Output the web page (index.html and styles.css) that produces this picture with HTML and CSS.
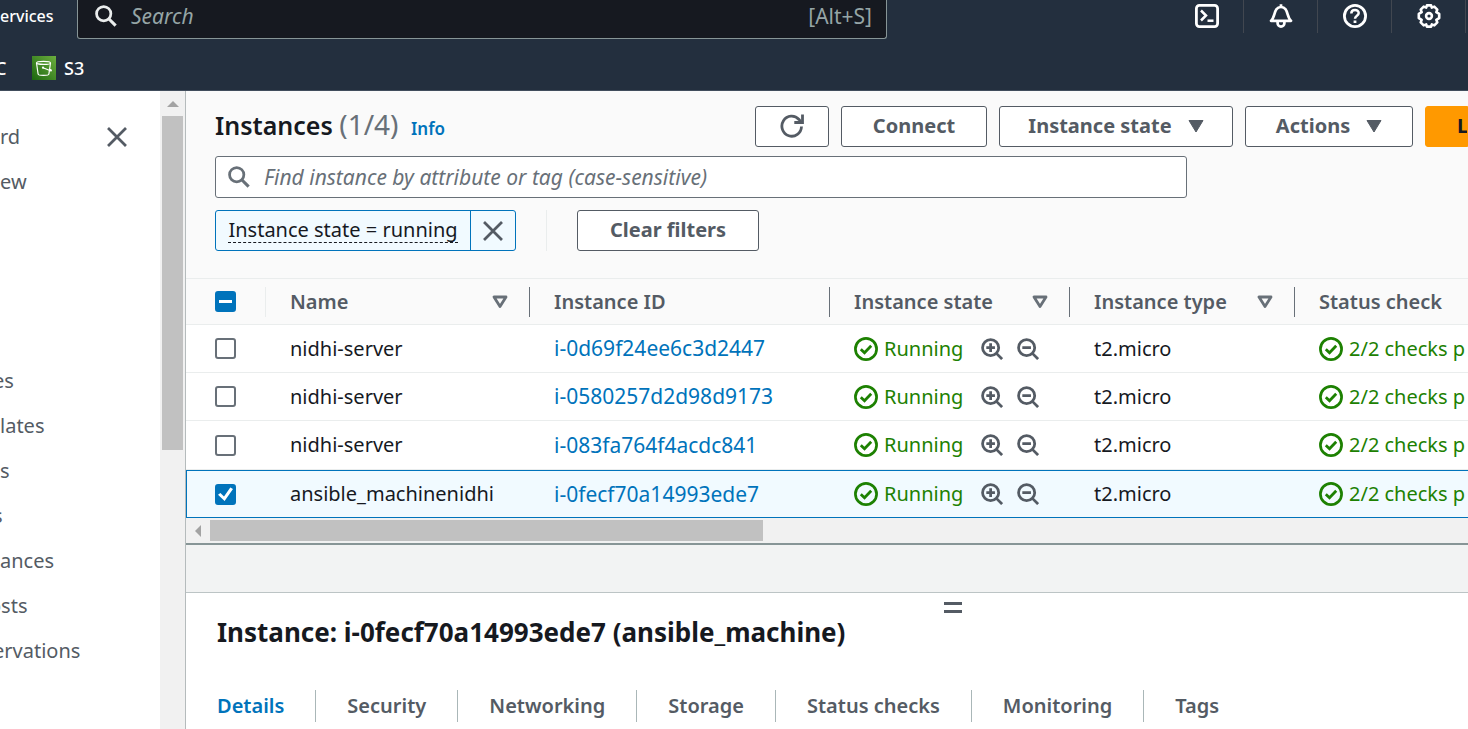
FILE: index.html
```html
<!DOCTYPE html>
<html lang="en">
<head>
<meta charset="utf-8">
<title>Instances</title>
<link rel="stylesheet" href="styles.css">
</head>
<body>
<svg class="sprite" aria-hidden="true">
  <symbol id="search" viewBox="0 0 24 24"><circle cx="9.5" cy="9.5" r="7.8" fill="none" stroke="currentColor" stroke-width="3"/><path d="M15 15l7.500 7.500" fill="none" stroke="currentColor" stroke-width="3.4"/></symbol>
  <symbol id="close" viewBox="0 0 24 24"><path d="M2.200 2.200l19.600 19.600M21.800 2.200L2.200 21.800" fill="none" stroke="currentColor" stroke-width="3"/></symbol>
  <symbol id="caret" viewBox="0 0 16 14"><path d="M1 1.500h14L8 13z" fill="currentColor" stroke="currentColor" stroke-linejoin="round"/></symbol>
  <symbol id="sort" viewBox="0 0 16 14"><path d="M2 2h12L8 11.500z" fill="none" stroke="currentColor" stroke-width="2.800" stroke-linejoin="round"/></symbol>
  <symbol id="ok" viewBox="0 0 24 24"><circle cx="12" cy="12" r="10.600" fill="none" stroke="currentColor" stroke-width="2.700"/><path d="M6.800 12.200l3.700 3.500 6.700-7" fill="none" stroke="currentColor" stroke-width="2.800"/></symbol>
  <symbol id="zoom-in" viewBox="0 0 24 24"><circle cx="10.500" cy="10.500" r="8.800" fill="none" stroke="currentColor" stroke-width="3"/><path d="M16.500 16.500l6.500 6.500M10.500 5.800v9.400M5.800 10.500h9.400" fill="none" stroke="currentColor" stroke-width="3"/></symbol>
  <symbol id="zoom-out" viewBox="0 0 24 24"><circle cx="10.500" cy="10.500" r="8.800" fill="none" stroke="currentColor" stroke-width="3"/><path d="M16.500 16.500l6.500 6.500M5.800 10.500h9.400" fill="none" stroke="currentColor" stroke-width="3"/></symbol>
</svg>

<header class="topbar">
  <div class="topbar-main">
    <button class="services" type="button">ervices</button>
    <label class="global-search">
      <svg class="icon-md"><use href="#search"/></svg>
      <input type="text" placeholder="Search" aria-label="Search">
      <span class="shortcut">[Alt+S]</span>
    </label>
    <div class="utilities">
      <button type="button" aria-label="CloudShell"><svg class="icon-lg" viewBox="0 0 24 24" fill="none" stroke="currentColor" stroke-width="2.800"><rect x="1.400" y="1.400" width="21.200" height="21.200" rx="3"/><path d="M6 6.500l5 5-5 5" stroke-width="2.500"/><path d="M12.500 16.700h6" stroke-width="2.500"/></svg></button>
      <button type="button" aria-label="Notifications"><svg class="icon-lg" viewBox="0 0 24 24" fill="none" stroke="currentColor" stroke-width="2.700" stroke-linejoin="round"><path d="M2 16.800C6.500 13.500 4.500 3 12 3s5.500 10.500 10 13.800z"/><path d="M12 .3v3M8.600 17.500v1.700a3.400 3.400 0 0 0 6.800 0v-1.700"/></svg></button>
      <button type="button" aria-label="Help"><svg class="icon-lg" viewBox="0 0 24 24" fill="none" stroke="currentColor" stroke-width="2.800"><circle cx="12" cy="12" r="10.600"/><path d="M8.300 9.500c0-4.800 7.400-4.600 7.400-.4 0 2.900-3.700 2.500-3.700 5.700" stroke-width="2.500"/><path d="M12 16.500v2.500" stroke-width="2.800"/></svg></button>
      <button type="button" aria-label="Settings"><svg class="icon-lg" viewBox="0 0 24 24" fill="none" stroke="currentColor" stroke-width="2.600" stroke-linejoin="round"><path d="M9.900 1.400h4.200l.7 2.200 2.500-1 3 3-1 2.600 2.900 1.700v4.200l-2.900 1.700 1 2.600-3 3-2.500-1-.7 2.200H9.900l-.7-2.200-2.500 1-3-3 1-2.600-2.900-1.700V9.900l2.900-1.700-1-2.600 3-3 2.500 1z"/><circle cx="12" cy="12" r="2.900"/></svg></button>
    </div>
  </div>
  <nav class="favorites" aria-label="Favorites">
    <a href="#" class="fav-cut">C</a>
    <a href="#" class="fav">
      <svg class="icon-lg" viewBox="0 0 24 24"><defs><linearGradient id="s3" x1="0" y1="1" x2="1" y2="0"><stop offset="0" stop-color="#1b660f"/><stop offset="1" stop-color="#6cae3e"/></linearGradient></defs><path fill="url(#s3)" d="M0 0h24v24H0z"/><g fill="none" stroke="#fff" stroke-width="1.200"><ellipse cx="11.500" cy="6.900" rx="7" ry="1.500"/><path d="M4.500 7l1.600 11c.2 1.900 10.600 1.900 10.800 0l1.600-11M11 11.800l7.500 3c1.500.4 1-1-1-1.900"/></g><circle cx="11" cy="11.700" r="1.100" fill="#fff"/></svg>
      <span>S3</span>
    </a>
  </nav>
</header>

<div class="shell">
  <aside class="sidebar">
    <nav class="side-nav" aria-label="EC2">
      <div class="side-row"><a href="#">rd</a><button type="button" aria-label="Close navigation"><svg class="icon-md"><use href="#close"/></svg></button></div>
      <a href="#">ew</a>
      <a href="#" class="group-start tuck">es</a>
      <a href="#">lates</a>
      <a href="#">s</a>
      <a href="#" class="tuck">s</a>
      <a href="#">ances</a>
      <a href="#" class="tuck-more">osts</a>
      <a href="#" class="tuck">ervations</a>
    </nav>
    <div class="vscroll"><svg class="arrow" viewBox="0 0 12 12"><path d="M0 9l6-6 6 6z"/></svg><div class="vthumb"></div></div>
  </aside>

  <main class="content">
    <section class="panel-head">
      <div class="title-row">
        <h1>Instances <span class="count">(1/4)</span> <a href="#">Info</a></h1>
        <div class="actions">
          <button class="btn btn-refresh" type="button" aria-label="Refresh"><svg class="icon-lg" viewBox="0 0 24 24" fill="none" stroke="currentColor" stroke-width="2.800"><path d="M21.500 12.500A9.800 10 0 1 1 19 5.500l2 2.500"/><path d="M22.500.5v8h-8.200"/></svg></button>
          <button class="btn btn-connect" type="button">Connect</button>
          <button class="btn btn-state" type="button">Instance state <svg class="caret"><use href="#caret"/></svg></button>
          <button class="btn btn-actions" type="button">Actions <svg class="caret"><use href="#caret"/></svg></button>
          <button class="btn btn-launch" type="button">L</button>
        </div>
      </div>
      <label class="filter-box">
        <svg class="icon-md"><use href="#search"/></svg>
        <input type="text" placeholder="Find instance by attribute or tag (case-sensitive)" aria-label="Find instance by attribute or tag">
      </label>
      <div class="filter-row">
        <div class="token">
          <button class="token-text" type="button"><span>Instance state = running</span></button>
          <button class="token-x" type="button" aria-label="Remove filter"><svg class="icon-md"><use href="#close"/></svg></button>
        </div>
        <div class="clear-wrap"><button class="btn btn-clear" type="button">Clear filters</button></div>
      </div>
    </section>

    <table class="instances">
      <colgroup><col class="c-check"><col class="c-name"><col class="c-id"><col class="c-state"><col class="c-type"><col></colgroup>
      <thead>
        <tr>
          <th class="light"><input type="checkbox" class="mixed" aria-label="Select all"></th>
          <th><div>Name <svg class="sort"><use href="#sort"/></svg></div></th>
          <th><div>Instance ID</div></th>
          <th><div>Instance state <svg class="sort"><use href="#sort"/></svg></div></th>
          <th><div>Instance type <svg class="sort"><use href="#sort"/></svg></div></th>
          <th><div>Status check</div></th>
        </tr>
      </thead>
      <tbody>
        <tr>
          <td><input type="checkbox" aria-label="Select i-0d69f24ee6c3d2447"></td><td>nidhi-server</td><td><a href="#">i-0d69f24ee6c3d2447</a></td>
          <td><div class="status"><svg class="icon-lg"><use href="#ok"/></svg><span>Running</span><button type="button" aria-label="Include"><svg class="icon-md"><use href="#zoom-in"/></svg></button><button type="button" aria-label="Exclude"><svg class="icon-md"><use href="#zoom-out"/></svg></button></div></td>
          <td>t2.micro</td><td><div class="status"><svg class="icon-lg"><use href="#ok"/></svg><span>2/2 checks p</span></div></td>
        </tr>
        <tr>
          <td><input type="checkbox" aria-label="Select i-0580257d2d98d9173"></td><td>nidhi-server</td><td><a href="#">i-0580257d2d98d9173</a></td>
          <td><div class="status"><svg class="icon-lg"><use href="#ok"/></svg><span>Running</span><button type="button" aria-label="Include"><svg class="icon-md"><use href="#zoom-in"/></svg></button><button type="button" aria-label="Exclude"><svg class="icon-md"><use href="#zoom-out"/></svg></button></div></td>
          <td>t2.micro</td><td><div class="status"><svg class="icon-lg"><use href="#ok"/></svg><span>2/2 checks p</span></div></td>
        </tr>
        <tr class="before-selected">
          <td><input type="checkbox" aria-label="Select i-083fa764f4acdc841"></td><td>nidhi-server</td><td><a href="#">i-083fa764f4acdc841</a></td>
          <td><div class="status"><svg class="icon-lg"><use href="#ok"/></svg><span>Running</span><button type="button" aria-label="Include"><svg class="icon-md"><use href="#zoom-in"/></svg></button><button type="button" aria-label="Exclude"><svg class="icon-md"><use href="#zoom-out"/></svg></button></div></td>
          <td>t2.micro</td><td><div class="status"><svg class="icon-lg"><use href="#ok"/></svg><span>2/2 checks p</span></div></td>
        </tr>
        <tr class="selected">
          <td><input type="checkbox" checked aria-label="Select i-0fecf70a14993ede7"></td><td>ansible_machinenidhi</td><td><a href="#">i-0fecf70a14993ede7</a></td>
          <td><div class="status"><svg class="icon-lg"><use href="#ok"/></svg><span>Running</span><button type="button" aria-label="Include"><svg class="icon-md"><use href="#zoom-in"/></svg></button><button type="button" aria-label="Exclude"><svg class="icon-md"><use href="#zoom-out"/></svg></button></div></td>
          <td>t2.micro</td><td><div class="status"><svg class="icon-lg"><use href="#ok"/></svg><span>2/2 checks p</span></div></td>
        </tr>
      </tbody>
    </table>
    <div class="hscroll"><svg class="arrow" viewBox="0 0 12 12"><path d="M9 0L3 6l6 6z"/></svg><div class="hthumb"></div></div>
    <div class="spacer"></div>

    <section class="details">
      <div class="grip"><span></span></div>
      <h2>Instance: i-0fecf70a14993ede7 (ansible_machine)</h2>
      <nav class="tabs" aria-label="Instance details">
        <a href="#" class="active">Details</a><a href="#">Security</a><a href="#">Networking</a><a href="#">Storage</a><a href="#">Status checks</a><a href="#">Monitoring</a><a href="#">Tags</a>
      </nav>
    </section>
  </main>
</div>
</body>
</html>
```
FILE: styles.css
```css
* { box-sizing: border-box; }
body {
  margin: 0;
  height: 100vh;
  display: flex;
  flex-direction: column;
  overflow: hidden;
  background: #fff;
  color: #16191f;
  font: 20px/28px "Noto Sans", "Open Sans", sans-serif;
}
a { color: #0073bb; text-decoration: none; }
button { font: inherit; color: inherit; background: none; border: 0; padding: 0; white-space: nowrap; }
input { font: inherit; }
svg { flex: none; display: block; }
.sprite { display: none; }
.icon-md { width: 22px; height: 22px; }
.icon-lg { width: 24px; height: 24px; }

/* Top bar */
.topbar { flex: none; background: #232f3e; color: #fff; border-bottom: 1px solid #414d5c; }
.topbar-main { display: flex; align-items: flex-start; height: 39px; }
.services { width: 77px; height: 32px; padding-right: 24px; text-align: right; font-size: 16px; font-weight: 500; }
.global-search {
  display: flex;
  align-items: center;
  width: 810px;
  height: 39px;
  padding: 0 14px 7px 17px;
  background: #161920;
  border: 1px solid #879596;
  border-top: 0;
  border-radius: 0 0 3px 3px;
}
.global-search svg { color: #eaeded; }
.global-search input { flex: 1; min-width: 0; margin-left: 14px; padding: 0; border: 0; background: none; font-size: 21px; }
.global-search input::placeholder { color: #95a5a6; font-style: italic; opacity: 1; }
.shortcut { color: #95a5a6; font-size: 21px; }
.utilities { display: flex; margin-left: auto; padding-right: 2px; }
.utilities button { display: flex; align-items: center; justify-content: center; width: 74px; height: 33px; padding-bottom: 1px; border-right: 1px solid #414750; }
.favorites { display: flex; align-items: center; height: 51px; padding-top: 6px; font-size: 18px; font-weight: 500; }
.favorites a { color: #fff; }
.fav-cut { width: 32px; text-indent: -5px; }
.fav { display: flex; gap: 8px; align-items: center; }

/* Side navigation */
.shell { flex: 1; display: flex; min-height: 0; }
.sidebar { flex: none; width: 186px; display: flex; border-right: 1px solid #b5bbbc; }
.side-nav { flex: 1; display: flex; flex-direction: column; padding-top: 23px; overflow: hidden; color: #545b64; }
.side-nav a { color: #545b64; line-height: 45px; }
.side-row { display: flex; justify-content: space-between; align-items: center; padding-right: 32px; }
.side-nav .group-start { margin-top: 154px; }
.side-nav .tuck { text-indent: -7px; }
.side-nav .tuck-more { text-indent: -11px; }
.vscroll { width: 25px; display: flex; flex-direction: column; align-items: center; background: #f1f1f1; }
.arrow { width: 12px; height: 12px; fill: #a3a3a3; }
.vscroll .arrow { margin: 7px 0 6px; }
.vthumb { width: 21px; height: 334px; background: #c1c1c1; }

/* Instance list */
.content { flex: 1; min-width: 0; display: flex; flex-direction: column; overflow: hidden; }
.panel-head { background: #fafafa; border-bottom: 1px solid #eaeded; padding: 15px 0 27px 29px; }
.title-row { display: flex; justify-content: space-between; }
h1 { margin: 0; font-size: 25px; line-height: 36px; font-weight: 600; white-space: nowrap; }
.count { color: #687078; font-weight: 400; font-size: 28px; }
h1 a { font-size: 17px; margin-left: 6px; }
.actions { display: flex; gap: 12px; }
.btn {
  display: flex;
  align-items: center;
  justify-content: center;
  height: 41px;
  padding-bottom: 1px;
  background: #fff;
  color: #545b64;
  border: 1px solid #545b64;
  border-radius: 3px;
  font-weight: 700;
}
.caret { width: 16px; height: 14px; margin-left: 16px; }
.btn-refresh { width: 74px; }
.btn-connect { width: 146px; }
.btn-state { width: 234px; }
.btn-actions { width: 168px; }
.btn-clear { width: 182px; }
.btn-launch { width: 43px; padding-left: 31px; justify-content: flex-start; background: #ff9900; border-color: #ff9900; border-radius: 3px 0 0 3px; color: #16191f; overflow: hidden; }
.filter-box { display: flex; align-items: center; max-width: 972px; height: 42px; margin-top: 9px; padding-left: 12px; background: #fff; border: 1px solid #687078; border-radius: 3px; color: #687078; }
.filter-box input { flex: 1; min-width: 0; margin-left: 14px; padding: 0; border: 0; background: none; font-size: 21px; }
.filter-box input::placeholder { color: #687078; font-style: italic; opacity: 1; }
.filter-row { display: flex; margin-top: 12px; }
.token { display: flex; height: 41px; border: 1px solid #0073bb; border-radius: 3px; background: #f1faff; }
.token-text { width: 254px; padding-bottom: 2px; }
.token-text span { display: inline-block; line-height: 25px; border-bottom: 1px dashed #16191f; }
.token-x { display: flex; align-items: center; justify-content: center; width: 45px; border-left: 1px solid #0073bb; color: #545b64; }
.clear-wrap { margin-left: 30px; padding-left: 30px; border-left: 1px solid #eaeded; }

.instances { width: 100%; table-layout: fixed; border-collapse: separate; border-spacing: 0; }
.c-check { width: 80px; }
.c-name { width: 264px; }
.c-id { width: 300px; }
.c-state { width: 240px; }
.c-type { width: 225px; }
.instances th, .instances td { padding: 0 0 0 24px; text-align: left; white-space: nowrap; border-bottom: 1px solid #eaeded; }
.instances th:first-child, .instances td:first-child { padding-left: 29px; }
.instances th { height: 46px; background: #fafafa; color: #545b64; font-weight: 600; background-repeat: no-repeat; background-position: right center; background-size: 1px 30px; background-image: linear-gradient(#687078, #687078); }
.instances th.light { background-image: linear-gradient(#eaeded, #eaeded); }
.instances th:last-child { background-image: none; }
.instances th div { display: flex; align-items: center; justify-content: space-between; padding-right: 22px; }
.instances td { height: 48px; }
.instances td a { font-size: 21px; }
.sort { width: 16px; height: 14px; color: #687078; }
.status { display: flex; align-items: center; color: #1d8102; }
.status span { margin-left: 6px; }
.status button { color: #545b64; margin-left: 14px; }
.status span + button { margin-left: 18px; }
.instances .selected td { background: #f1faff; border-top: 1px solid #0073bb; border-bottom-color: #0073bb; }
.instances .before-selected td { height: 49px; }
.instances .selected td:first-child { padding-left: 28px; border-left: 1px solid #0073bb; }
.instances input {
  appearance: none;
  display: block;
  width: 21px;
  height: 21px;
  margin: 0;
  border: 2px solid #687078;
  border-radius: 3px;
  background: #fff;
}
.instances input.mixed, .instances input:checked { border-color: #0073bb; background: #0073bb; display: grid; place-items: center; }
.instances input.mixed::before { content: ""; width: 13px; height: 3px; background: #fff; }
.instances input:checked::before { content: ""; width: 15px; height: 14px; background: #fff; clip-path: polygon(0 55%, 16% 42%, 40% 68%, 82% 4%, 100% 14%, 44% 100%); }
.hscroll { flex: none; display: flex; align-items: center; height: 25px; background: #f1f1f1; }
.hscroll .arrow { margin: 0 6px 0 6px; }
.hthumb { width: 553px; height: 21px; background: #c1c1c1; }
.spacer { flex: none; height: 50px; background: #f2f3f3; border-top: 2px solid #879596; border-bottom: 1px solid #bcc4c5; }

/* Detail panel */
.details { padding: 9px 0 0 31px; }
.grip { display: flex; justify-content: flex-end; padding-right: 506px; }
.grip span { width: 18px; height: 11px; border: solid #545b64; border-width: 3px 0; }
h2 { margin: 2px 0 0; font-size: 26px; line-height: 34px; font-weight: 700; white-space: nowrap; }
.tabs { display: flex; margin-top: 41px; }
.tabs a { color: #545b64; font-weight: 600; line-height: 32px; padding: 0 31px; border-left: 1px solid #aab7b8; white-space: nowrap; }
.tabs a.active { color: #0073bb; padding-left: 0; border-left: 0; }
```
